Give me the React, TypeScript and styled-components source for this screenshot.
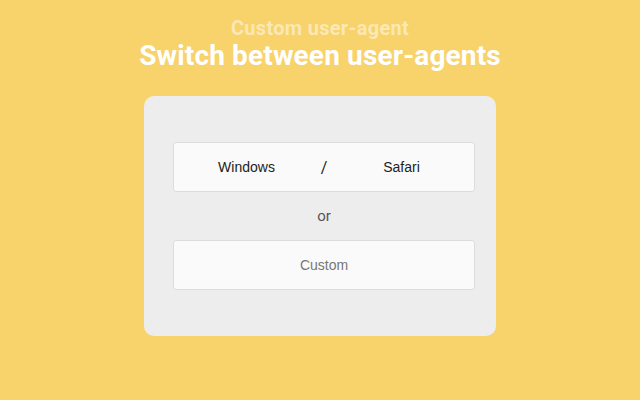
import styled, { createGlobalStyle } from "styled-components";

/*--------------------------
    Styled
--------------------------*/
const GlobalStyles = createGlobalStyle`
    html, body {
        margin: 0;
        padding: 0;
        background-color: #f8d26a;
    }
    body {
        font-family: Roboto, "Liberation Sans", sans-serif;
    }
`;

const Page = styled.div`
    display: flex;
    width: 640px;
    height: 400px;
    padding: 14px 0 0 0;
    box-sizing: border-box;
    flex-direction: column;
    align-items: center;
`;
const SubTitle = styled.div`
    color: rgba(255, 255, 255, 0.5);
    font-size: 20px;
    font-weight: bold;
    line-height: 28px;
    letter-spacing: 0.3px;
`;
const Title = styled.h1`
    margin: 0;
    color: #fff;
    font-size: 28px;
    font-weight: bold;
    line-height: 28px;
    letter-spacing: 0.15px;
`;
const Card = styled.div`
    display: flex;
    width: 352px;
    margin: 26px 0 0 0;
    padding: 46px 21px 46px 29px;
    box-sizing: border-box;
    border-radius: 10px;
    background-color: #ededed;
    flex-direction: column;
    align-items: stretch;
`;
const Field = styled.div<{ $placeholder?: boolean }>`
    display: grid;
    height: 50px;
    border: 1px solid #dcdcdc;
    border-radius: 3px;
    box-sizing: border-box;
    background-color: #fafafa;
    grid-template-columns: ${(p) => (p.$placeholder ? "1fr" : "1fr 10px 1fr")};
    align-items: center;
    justify-items: center;
    color: ${(p) => (p.$placeholder ? "#777" : "#222")};
    font-family: "Liberation Sans", Arial, sans-serif;
    font-size: 14px;
`;
const Slash = styled.span`
    color: #222;
    font-family: Roboto, sans-serif;
    font-size: 16px;
`;
const Or = styled.div`
    height: 48px;
    line-height: 48px;
    color: #555;
    font-size: 15px;
    text-align: center;
`;

/*--------------------------
    Main
--------------------------*/
const App = () => {
    return (
        <>
            <GlobalStyles />
            <Page>
                <SubTitle>Custom user-agent</SubTitle>
                <Title>Switch between user-agents</Title>
                <Card>
                    <Field>
                        <span>Windows</span>
                        <Slash>/</Slash>
                        <span>Safari</span>
                    </Field>
                    <Or>or</Or>
                    <Field $placeholder>Custom</Field>
                </Card>
            </Page>
        </>
    );
};

export default App;
